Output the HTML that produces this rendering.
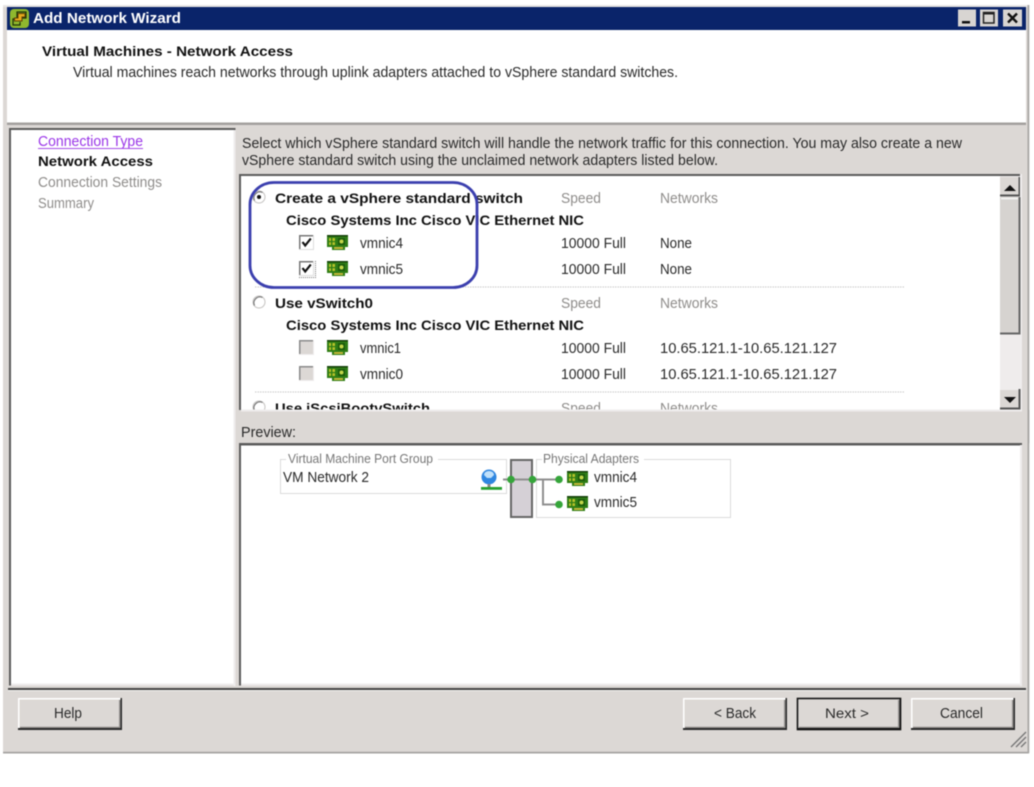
<!DOCTYPE html>
<html><head><meta charset="utf-8"><title>Add Network Wizard</title>
<style>
html,body{margin:0;padding:0;background:#fff;width:1034px;height:787px;overflow:hidden}
svg{display:block;filter:blur(.4px)}
text{font-family:"Liberation Sans",sans-serif;font-size:14.5px;fill:#2a2a2a}
.b{font-weight:bold;font-size:14px;fill:#111}
.g{fill:#8f8d8b}
</style></head><body>
<svg width="1034" height="787" viewBox="0 0 1034 787" xmlns="http://www.w3.org/2000/svg">
<defs>
<g id="nic">
<path d="M0 0H21V12H18V15H5V12H0Z" fill="#2f7d16"/>
<path d="M0 0H21V1.500H0Z" fill="#143f08"/>
<rect x="2" y="3" width="6" height="7" fill="#b7c22a"/>
<rect x="4" y="3" width="1.400" height="7" fill="#2f7d16"/>
<rect x="2" y="6" width="6" height="1.200" fill="#2f7d16"/>
<rect x="11" y="3" width="7" height="7" fill="#1c5c0c"/>
<circle cx="14.500" cy="6.500" r="2" fill="#c5d64a"/>
<rect x="7" y="12" width="9" height="2" fill="#c4b63a"/>
</g>
<g id="btn">
<rect width="104" height="32" fill="#dcd8d5"/>
<path d="M0 0H104V1.500H0ZM0 0H1.500V32H0Z" fill="#fff"/>
<path d="M102.500 0H104V32H0V30H102.500Z" fill="#2a2a2a"/>
<path d="M101 2H102.500V30H2V28.800H101Z" fill="#8f8c8a"/>
</g>
<g id="radio">
<circle cx="0" cy="0" r="6" fill="#fff" stroke="#c4c2c0" stroke-width="1"/>
<path d="M-4.500 3.500A6 6 0 0 1 3.500 -4.500" fill="none" stroke="#777" stroke-width="1.200"/>
</g>
<g id="cbx">
<rect width="15" height="15" fill="#fff"/>
<path d="M0 0H15V1.500H1.500V15H0Z" fill="#777"/>
<path d="M15 0V15H0V14H14V0Z" fill="#ddd"/>
</g>
<g id="cbd">
<rect width="15" height="15" fill="#dcd8d5"/>
<path d="M0 0H15V1.500H1.500V15H0Z" fill="#8a8a8a"/>
<path d="M15 0V15H0V14H14V0Z" fill="#efeded"/>
</g>
<path id="chk" d="M3.500 7L6.200 10.500L11.800 3.500" fill="none" stroke="#111" stroke-width="2.200"/>
</defs>

<!-- window -->
<rect x="3" y="5" width="1026" height="748.500" fill="#dcd8d5"/>
<rect x="3" y="5" width="1026" height="2" fill="#e8e6e4"/>
<rect x="3" y="751.800" width="1026" height="1.700" fill="#a5a3a1"/>
<rect x="1027.500" y="5" width="1.800" height="748" fill="#a8a6a4"/>
<rect x="7" y="7" width="1019" height="23" fill="#0a246a"/>
<rect x="7" y="30" width="1019" height="92.500" fill="#fff"/>
<rect x="7" y="122.500" width="1019" height="2.500" fill="#a3a09e"/>

<!-- title icon -->
<rect x="10" y="9" width="19" height="19" rx="4" fill="#8fb82e"/>
<path d="M16 19H13V25H20V22M17 12V18H26V12Z" fill="none" stroke="#1d3206" stroke-width="1.200"/>
<path d="M18 13.500H25V17H22V21H14.500V18H18Z" fill="#e5a91c" stroke="#5b3f05" stroke-width="1"/>
<text x="33" y="23" class="b" style="fill:#fff;font-size:14.500px" textLength="148" lengthAdjust="spacingAndGlyphs">Add Network Wizard</text>

<!-- title buttons -->
<g>
<rect x="958" y="9.500" width="18" height="17" fill="#d8d5d2"/>
<rect x="962" y="21" width="8" height="2.500" fill="#111"/>
<rect x="980" y="9.500" width="18" height="17" fill="#d8d5d2"/>
<rect x="983.500" y="12.500" width="10.500" height="10.500" fill="none" stroke="#222" stroke-width="1.500"/>
<rect x="983" y="12" width="11.500" height="2.500" fill="#222"/>
<rect x="1003" y="9.500" width="19" height="17" fill="#d8d5d2"/>
<path d="M1008 13.500L1017 22.500M1017 13.500L1008 22.500" stroke="#111" stroke-width="2.400"/>
</g>

<text x="42" y="56" class="b" textLength="251" lengthAdjust="spacingAndGlyphs">Virtual Machines - Network Access</text>
<text x="73" y="77" textLength="605" lengthAdjust="spacingAndGlyphs">Virtual machines reach networks through uplink adapters attached to vSphere standard switches.</text>

<!-- left panel -->
<rect x="9" y="128" width="226.500" height="557.500" fill="#fff"/>
<path d="M9 128H235.500V130H11V685.500H9Z" fill="#5b5b5b"/>
<rect x="233.500" y="130" width="2" height="556" fill="#efeded"/>
<rect x="11" y="683.500" width="224" height="2" fill="#efeded"/>
<text x="38" y="146" style="fill:#9a35e8" textLength="105" lengthAdjust="spacingAndGlyphs">Connection Type</text>
<rect x="38" y="148" width="105" height="1" fill="#a64be8"/>
<text x="38" y="166" class="b" textLength="115" lengthAdjust="spacingAndGlyphs">Network Access</text>
<text x="38" y="187" class="g" textLength="124" lengthAdjust="spacingAndGlyphs">Connection Settings</text>
<text x="38" y="208" class="g" textLength="56" lengthAdjust="spacingAndGlyphs">Summary</text>

<!-- instructions -->
<text x="242" y="148" textLength="720" lengthAdjust="spacingAndGlyphs">Select which vSphere standard switch will handle the network traffic for this connection. You may also create a new</text>
<text x="242" y="165" textLength="476" lengthAdjust="spacingAndGlyphs">vSphere standard switch using the unclaimed network adapters listed below.</text>

<!-- list box -->
<rect x="239" y="174" width="783" height="239" fill="#fff"/>
<path d="M239 174H1021V176H241V411H239Z" fill="#5b5b5b"/>
<rect x="1020" y="174" width="2" height="238" fill="#efeded"/>

<use href="#radio" x="259" y="197"/>
<circle cx="259" cy="197" r="2" fill="#111"/>
<text x="275" y="203" class="b" textLength="248" lengthAdjust="spacingAndGlyphs">Create a vSphere standard switch</text>
<text x="561" y="203" class="g" textLength="40" lengthAdjust="spacingAndGlyphs">Speed</text>
<text x="660" y="203" class="g" textLength="58" lengthAdjust="spacingAndGlyphs">Networks</text>
<text x="286" y="225" class="b" textLength="298" lengthAdjust="spacingAndGlyphs">Cisco Systems Inc Cisco VIC Ethernet NIC</text>

<use href="#cbx" x="299" y="235"/><use href="#chk" x="299" y="235"/>
<use href="#nic" x="327" y="235"/>
<text x="360" y="248" textLength="43" lengthAdjust="spacingAndGlyphs">vmnic4</text>
<text x="561" y="248" textLength="65" lengthAdjust="spacingAndGlyphs">10000 Full</text>
<text x="660" y="248" textLength="32" lengthAdjust="spacingAndGlyphs">None</text>

<use href="#cbx" x="299" y="261"/><use href="#chk" x="299" y="261"/>
<path d="M315.500 261V277.500H299" fill="none" stroke="#777" stroke-dasharray="1 1"/>
<use href="#nic" x="327" y="261"/>
<text x="360" y="274" textLength="43" lengthAdjust="spacingAndGlyphs">vmnic5</text>
<text x="561" y="274" textLength="65" lengthAdjust="spacingAndGlyphs">10000 Full</text>
<text x="660" y="274" textLength="32" lengthAdjust="spacingAndGlyphs">None</text>

<line x1="255" y1="287" x2="904" y2="287" stroke="#c9c9c9" stroke-dasharray="1.500 1"/>

<use href="#radio" x="259" y="302"/>
<text x="275" y="308" class="b" textLength="98" lengthAdjust="spacingAndGlyphs">Use vSwitch0</text>
<text x="561" y="308" class="g" textLength="40" lengthAdjust="spacingAndGlyphs">Speed</text>
<text x="660" y="308" class="g" textLength="58" lengthAdjust="spacingAndGlyphs">Networks</text>
<text x="286" y="330" class="b" textLength="298" lengthAdjust="spacingAndGlyphs">Cisco Systems Inc Cisco VIC Ethernet NIC</text>

<use href="#cbd" x="299" y="340"/>
<use href="#nic" x="327" y="340"/>
<text x="360" y="353" textLength="41" lengthAdjust="spacingAndGlyphs">vmnic1</text>
<text x="561" y="353" textLength="65" lengthAdjust="spacingAndGlyphs">10000 Full</text>
<text x="660" y="353" textLength="177" lengthAdjust="spacingAndGlyphs">10.65.121.1-10.65.121.127</text>

<use href="#cbd" x="299" y="366"/>
<use href="#nic" x="327" y="366"/>
<text x="360" y="379" textLength="43" lengthAdjust="spacingAndGlyphs">vmnic0</text>
<text x="561" y="379" textLength="65" lengthAdjust="spacingAndGlyphs">10000 Full</text>
<text x="660" y="379" textLength="177" lengthAdjust="spacingAndGlyphs">10.65.121.1-10.65.121.127</text>

<line x1="255" y1="392" x2="904" y2="392" stroke="#c9c9c9" stroke-dasharray="1.500 1"/>

<use href="#radio" x="259" y="407"/>
<text x="275" y="413" class="b" textLength="155" lengthAdjust="spacingAndGlyphs">Use iScsiBootvSwitch</text>
<text x="561" y="413" class="g" textLength="40" lengthAdjust="spacingAndGlyphs">Speed</text>
<text x="660" y="413" class="g" textLength="58" lengthAdjust="spacingAndGlyphs">Networks</text>

<!-- cover clipping bottom -->
<rect x="239" y="410" width="790" height="33" fill="#dcd8d5"/>
<rect x="1027.500" y="410" width="1.800" height="33" fill="#a8a6a4"/>
<rect x="241" y="409.500" width="781" height="2" fill="#efeded"/>

<!-- scrollbar -->
<rect x="1000" y="176" width="20" height="234" fill="#efecec"/>
<rect x="1000" y="177" width="20" height="19" fill="#dcd8d5"/>
<path d="M1000 194.500H1020V196.500H1000ZM1018.500 177H1020V196H1018.500Z" fill="#555"/>
<path d="M1004 191H1016L1010 185Z" fill="#111"/>
<rect x="1000" y="197" width="20" height="137" fill="#d6d3d0"/>
<rect x="1001" y="198" width="17" height="1.200" fill="#fff"/>
<path d="M1000 332.500H1020.500V334.500H1000ZM1018.500 197H1020.500V334H1018.500Z" fill="#666"/>
<rect x="1000" y="390" width="20" height="19" fill="#dcd8d5"/>
<path d="M1000 407.500H1020.500V409.500H1000ZM1018.500 389H1020.500V409H1018.500Z" fill="#555"/>
<path d="M1004 397H1016L1010 403Z" fill="#111"/>

<!-- blue annotation -->
<rect x="250" y="182.500" width="227" height="105" rx="24" ry="22" fill="none" stroke="#3b3fae" stroke-width="2.800"/>

<!-- preview -->
<text x="241" y="437" textLength="55" lengthAdjust="spacingAndGlyphs">Preview:</text>
<rect x="239" y="443" width="783" height="242.500" fill="#fff"/>
<path d="M239 443H1022V445.500H241V685.500H239Z" fill="#5b5b5b"/>
<rect x="1020" y="445" width="2" height="241" fill="#efeded"/>
<rect x="241" y="683.500" width="781" height="2" fill="#efeded"/>

<path d="M286 459.500H280.500V493.500H506.500V459.500H438" fill="none" stroke="#dbdbdb"/>
<text x="288" y="463" style="font-size:12.500px;fill:#777" textLength="145" lengthAdjust="spacingAndGlyphs">Virtual Machine Port Group</text>
<text x="283" y="482" textLength="86" lengthAdjust="spacingAndGlyphs">VM Network 2</text>
<circle cx="489" cy="477" r="7.500" fill="#2f86e0"/>
<path d="M484 475A5 4 0 0 1 494 475L491 478H487Z" fill="#bfe0fa"/>
<rect x="487.500" y="484" width="3" height="3" fill="#888"/>
<rect x="481" y="487" width="21" height="2.800" fill="#27a030"/>

<path d="M542 459.500H536.500V517.500H730.500V459.500H644" fill="none" stroke="#dbdbdb"/>
<text x="543" y="463" style="font-size:12.500px;fill:#777" textLength="96" lengthAdjust="spacingAndGlyphs">Physical Adapters</text>

<rect x="511" y="460" width="21" height="57" fill="#d5d0d6" stroke="#666" stroke-width="2"/>
<path d="M503 479.500H559M543 479.500V504.500H559" fill="none" stroke="#8f8f8f" stroke-width="2"/>
<circle cx="511" cy="479.500" r="3.800" fill="#35a53a"/>
<circle cx="532.500" cy="479.500" r="3.800" fill="#35a53a"/>
<circle cx="559" cy="479.500" r="3.800" fill="#35a53a"/>
<circle cx="559" cy="504.500" r="3.800" fill="#35a53a"/>
<use href="#nic" x="567" y="471"/>
<text x="594" y="482" textLength="43" lengthAdjust="spacingAndGlyphs">vmnic4</text>
<use href="#nic" x="567" y="496"/>
<text x="594" y="507" textLength="43" lengthAdjust="spacingAndGlyphs">vmnic5</text>

<!-- bottom separator -->
<rect x="8" y="688" width="1018" height="2" fill="#444"/>
<rect x="8" y="690" width="1018" height="1" fill="#f5f4f3"/>

<!-- buttons -->
<use href="#btn" x="18" y="698"/>
<text x="54" y="718" textLength="28" lengthAdjust="spacingAndGlyphs">Help</text>
<use href="#btn" x="683" y="698"/>
<text x="714" y="718" textLength="42" lengthAdjust="spacingAndGlyphs">&lt; Back</text>
<use href="#btn" x="797" y="698"/>
<rect x="797.500" y="698.500" width="103" height="31" fill="none" stroke="#111" stroke-width="1.600"/>
<rect x="797" y="728" width="104" height="2" fill="#111"/>
<text x="825" y="718" style="font-size:14px" textLength="44" lengthAdjust="spacingAndGlyphs">Next &gt;</text>
<use href="#btn" x="911" y="698"/>
<text x="940" y="718" textLength="43" lengthAdjust="spacingAndGlyphs">Cancel</text>

<!-- grip -->
<path d="M1011 747L1026 732M1016 747L1026 737M1021 747L1026 742" stroke="#777" stroke-width="1.400"/>
</svg>
</body></html>
